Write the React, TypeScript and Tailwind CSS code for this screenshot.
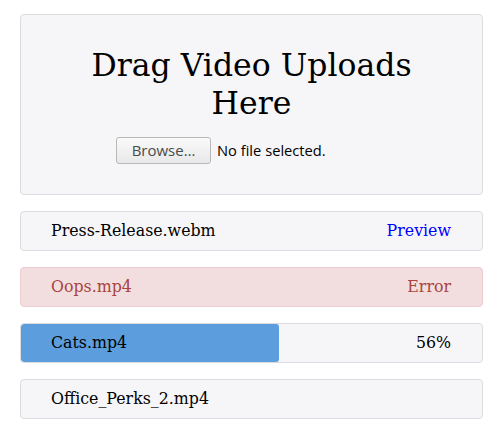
export default function App() {
  const rows = [
    { name: "Press-Release.webm", status: "Preview", kind: "done" },
    { name: "Oops.mp4", status: "Error", kind: "error" },
    { name: "Cats.mp4", status: "56%", kind: "progress", pct: 56 },
    { name: "Office_Perks_2.mp4", status: "", kind: "queued" },
  ];

  return (
    <div className="bg-white w-[503px] h-[430px] px-5 pt-[14px] font-['DejaVu_Serif',serif] text-black">
      <div className="h-[181px] rounded-[4px] border border-[#dcdce0] bg-[#f6f6f8] flex flex-col pt-[31px]">
        <h1 className="text-[31.5px] leading-[38px] text-center mx-auto w-[340px]">Drag Video Uploads Here</h1>
        <div className="mt-[15px] ml-[95px] flex items-center gap-[6px] font-['Open_Sans',sans-serif]">
          <button className="h-[27px] w-[95px] rounded-[3px] border border-[#b8b8b8] bg-gradient-to-b from-[#fafafa] to-[#e8e8e8] text-[#4a4a4a] text-[15px]">
            Browse…
          </button>
          <span className="text-[14.7px]">No file selected.</span>
        </div>
      </div>

      <div className="mt-4 flex flex-col gap-4">
        {rows.map((r) => (
          <div
            key={r.name}
            className={`relative h-[40px] rounded-[4px] border overflow-hidden ${
              r.kind === "error" ? "border-[#ebccd1] bg-[#f2dede] text-[#a94442]" : "border-[#dcdce0] bg-[#f6f6f8]"
            }`}
          >
            {r.kind === "progress" ? (
              <div className="absolute left-0 top-0 bottom-0 rounded-[3px] bg-[#5c9ddd]" style={{ width: `${r.pct}%` }} />
            ) : null}
            <div className="relative h-full flex items-center justify-between pl-[30px] pr-[31px] text-[15.8px]">
              <span>{r.name}</span>
              <span className={r.kind === "done" ? "text-[#0000ff]" : ""}>{r.status}</span>
            </div>
          </div>
        ))}
      </div>
    </div>
  );
}
